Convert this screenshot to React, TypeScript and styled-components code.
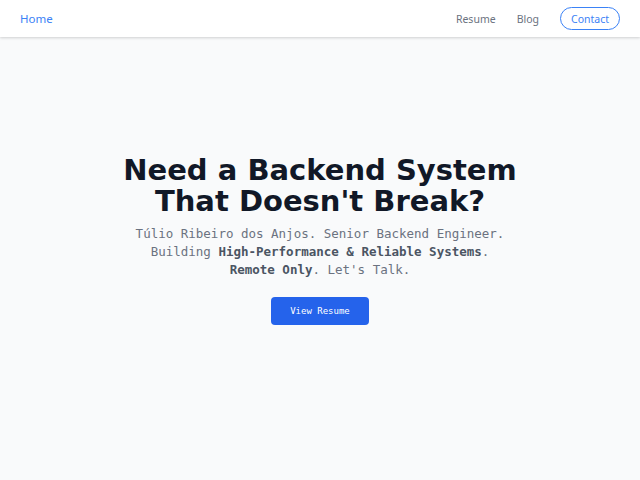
import styled, { createGlobalStyle } from "styled-components";

const GlobalStyle = createGlobalStyle`
  html, body {
    margin: 0;
    padding: 0;
    background: #f9fafb;
  }
  * {
    box-sizing: border-box;
  }
`;

const Page = styled.div`
  min-height: 100vh;
  display: flex;
  flex-direction: column;
  font-family: "Noto Sans", sans-serif;
`;

const Header = styled.header`
  height: 37px;
  background: #ffffff;
  box-shadow: 0 1px 3px rgba(0, 0, 0, 0.12), 0 1px 2px rgba(0, 0, 0, 0.06);
  display: flex;
  align-items: center;
  justify-content: space-between;
  padding: 0 20px;
`;

const HomeLink = styled.a`
  color: #3b82f6;
  font-size: 11.5px;
  text-decoration: none;
`;

const Nav = styled.nav`
  display: flex;
  align-items: center;
  gap: 21px;
`;

const NavLink = styled.a`
  color: #6b7280;
  font-size: 10.5px;
  text-decoration: none;
`;

const ContactLink = styled.a`
  color: #3b82f6;
  font-size: 10.5px;
  text-decoration: none;
  border: 1px solid #3b82f6;
  border-radius: 999px;
  width: 60px;
  height: 23px;
  display: flex;
  align-items: center;
  justify-content: center;
`;

const Hero = styled.main`
  flex: 1;
  display: flex;
  flex-direction: column;
  align-items: center;
  justify-content: center;
  padding-bottom: 37px;
  text-align: center;
`;

const Title = styled.h1`
  margin: 0;
  font-family: "DejaVu Sans", sans-serif;
  font-weight: 700;
  font-size: 29px;
  line-height: 31px;
  color: #111827;
`;

const Lead = styled.p`
  margin: 8px 0 0;
  font-family: "DejaVu Sans Mono", monospace;
  font-size: 12.5px;
  line-height: 18px;
  color: #6b7280;

  strong {
    color: #4b5563;
    font-weight: 700;
  }
`;

const Button = styled.button`
  margin-top: 18px;
  width: 98px;
  height: 28px;
  border: none;
  border-radius: 4px;
  background: #2563eb;
  color: #ffffff;
  font-family: "DejaVu Sans Mono", monospace;
  font-size: 9px;
  cursor: pointer;
`;

export default function App() {
  return (
    <Page>
      <GlobalStyle />
      <Header>
        <HomeLink href="#">Home</HomeLink>
        <Nav>
          <NavLink href="#">Resume</NavLink>
          <NavLink href="#">Blog</NavLink>
          <ContactLink href="#">Contact</ContactLink>
        </Nav>
      </Header>
      <Hero>
        <Title>
          Need a Backend System
          <br />
          That Doesn't Break?
        </Title>
        <Lead>
          Túlio Ribeiro dos Anjos. Senior Backend Engineer.
          <br />
          Building <strong>High-Performance &amp; Reliable Systems</strong>.
          <br />
          <strong>Remote Only</strong>. Let's Talk.
        </Lead>
        <Button>View Resume</Button>
      </Hero>
    </Page>
  );
}
